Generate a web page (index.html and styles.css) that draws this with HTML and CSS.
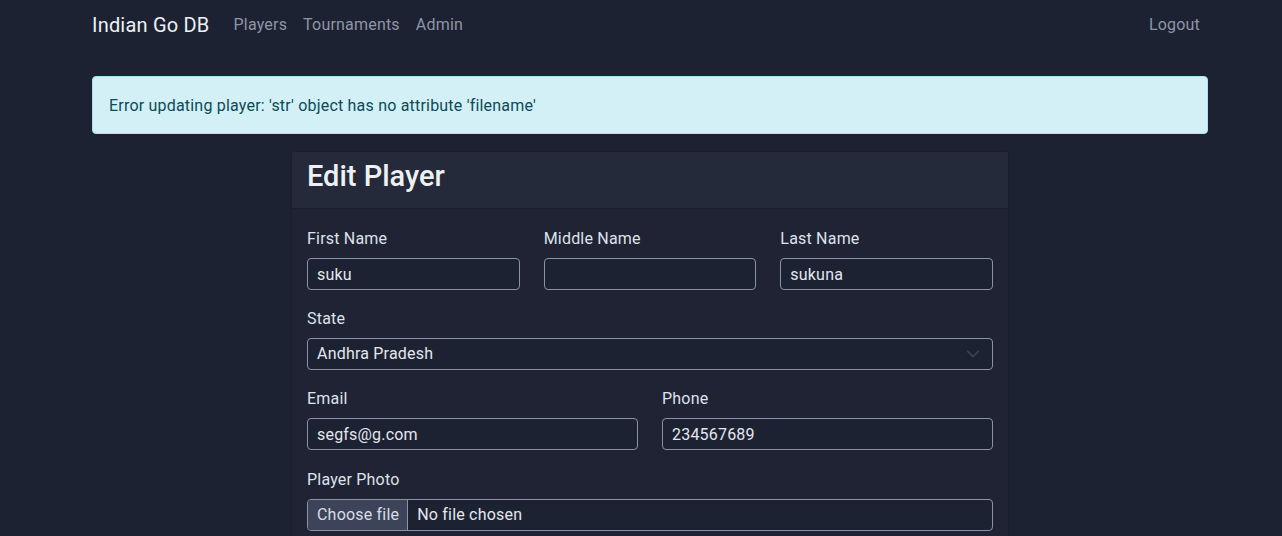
FILE: index.html
```html
<!DOCTYPE html>
<html>
<head>
<meta charset="utf-8">
<link rel="stylesheet" href="styles.css">
</head>
<body>
<nav class="navbar">
  <div class="nav-inner">
    <a class="brand" href="#">Indian Go DB</a>
    <ul class="nav-links">
      <li><a href="#">Players</a></li>
      <li><a href="#">Tournaments</a></li>
      <li><a href="#">Admin</a></li>
    </ul>
    <ul class="nav-links nav-right">
      <li><a href="#">Logout</a></li>
    </ul>
  </div>
</nav>
<main class="container">
  <div class="alert">Error updating player: 'str' object has no attribute 'filename'</div>
  <div class="card">
    <div class="card-header"><h2>Edit Player</h2></div>
    <div class="card-body">
      <div class="row three">
        <div class="field"><label>First Name</label><input class="control" type="text" value="suku"></div>
        <div class="field"><label>Middle Name</label><input class="control" type="text" value=""></div>
        <div class="field"><label>Last Name</label><input class="control" type="text" value="sukuna"></div>
      </div>
      <div class="field"><label>State</label>
        <div class="select">
          <span>Andhra Pradesh</span>
          <svg class="chev" width="16" height="16" viewBox="0 0 16 16"><path d="M2 5l6 6 6-6" fill="none" stroke="#3a4056" stroke-width="2" stroke-linecap="round" stroke-linejoin="round"/></svg>
        </div>
      </div>
      <div class="row two">
        <div class="field"><label>Email</label><input class="control" type="text" value="segfs@g.com"></div>
        <div class="field"><label>Phone</label><input class="control" type="text" value="234567689"></div>
      </div>
      <div class="field photo"><label>Player Photo</label>
        <div class="file">
          <span class="file-btn">Choose file</span>
          <span class="file-name">No file chosen</span>
        </div>
      </div>
    </div>
  </div>
</main>
</body>
</html>
```
FILE: styles.css
```css
* { box-sizing: border-box; }
html, body { margin: 0; padding: 0; }
body {
  background: #1d2232;
  color: #dee2ea;
  font-family: Roboto, "Noto Sans", sans-serif;
  font-size: 16px;
  line-height: 24px;
  letter-spacing: 0.2px;
  height: 536px;
  overflow: hidden;
}
a { text-decoration: none; }
.navbar { height: 48px; padding-top: 1px; }
.nav-inner {
  margin-left: 92px;
  width: 1116px;
  display: flex;
  align-items: center;
  height: 47px;
}
.brand {
  color: #eef0f4;
  font-size: 20px;
  line-height: 30px;
  margin-right: 16px;
}
.nav-links {
  list-style: none;
  margin: 0;
  padding: 0;
  display: flex;
}
.nav-links a {
  display: block;
  padding: 8px;
  color: #8e95a6;
}
.nav-right { margin-left: auto; }

.container {
  margin-left: 92px;
  width: 1116px;
  padding-top: 28px;
}
.alert {
  background: #d2f0f6;
  border: 1px solid #a9e3ef;
  border-radius: 4px;
  color: #0d4a58;
  padding: 17px 16px 15px;
  margin-bottom: 17px;
}
.card {
  width: 718px;
  margin: 0 auto;
  border: 1px solid #1a1e2c;
  border-radius: 4px;
  background: #1f2334;
}
.card-header {
  background: #252a3a;
  padding: 4px 15px 12px;
  border-bottom: 1px solid #1b1f2d;
}
.card-header h2 {
  margin: 0;
  font-size: 29px;
  line-height: 40px;
  font-weight: 500;
  letter-spacing: 0;
  color: #eef0f4;
}
.card-body { padding: 17px 15px 16px; }
.row { display: grid; gap: 24px; }
.row.three { grid-template-columns: 1fr 1fr 1fr; }
.row.two { grid-template-columns: 1fr 1fr; }
.field { margin-bottom: 16px; }
.row .field { margin-bottom: 16px; }
.row.two .field { margin-bottom: 17px; }
label {
  display: block;
  padding-top: 1px;
  margin-bottom: 7px;
  color: #dee2ea;
}
.control, .select, .file {
  display: flex;
  align-items: center;
  width: 100%;
  height: 32px;
  background: #1d2232;
  border: 1px solid #8a93a6;
  border-radius: 4px;
  color: #e4e7ee;
  font: inherit;
  letter-spacing: 0.2px;
  padding: 0 9px;
  outline: none;
}
.select { justify-content: space-between; padding-right: 12px; }
.chev { width: 14px; height: 14px; }
.file { padding: 0; overflow: hidden; }
.file-btn {
  background: #3d4459;
  color: #d9dde6;
  height: 100%;
  display: flex;
  align-items: center;
  padding: 0 8px 0 9px;
  border-right: 1px solid #8a93a6;
}
.file-name { padding-left: 9px; }
```
